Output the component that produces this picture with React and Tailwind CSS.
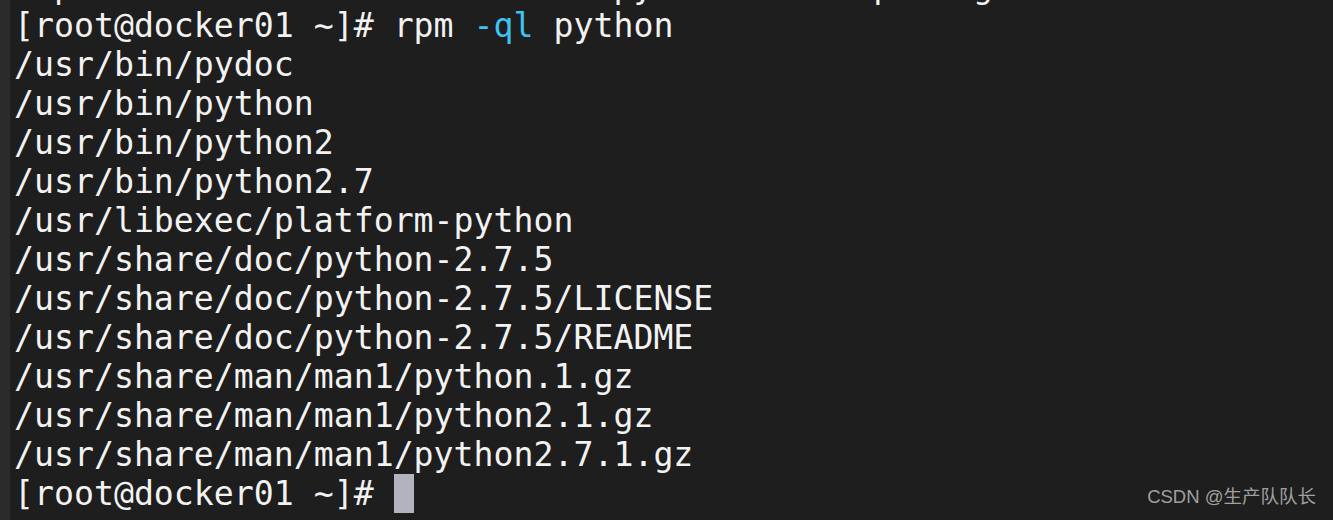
const lines = [
  "/usr/bin/pydoc",
  "/usr/bin/python",
  "/usr/bin/python2",
  "/usr/bin/python2.7",
  "/usr/libexec/platform-python",
  "/usr/share/doc/python-2.7.5",
  "/usr/share/doc/python-2.7.5/LICENSE",
  "/usr/share/doc/python-2.7.5/README",
  "/usr/share/man/man1/python.1.gz",
  "/usr/share/man/man1/python2.1.gz",
  "/usr/share/man/man1/python2.7.1.gz",
];

export default function App() {
  return (
    <div className="flex h-[520px] w-[1333px] overflow-hidden bg-[#1e1e1e]">
      <div className="w-[10px] shrink-0 bg-[#2b2b2b]" />
      <div className="relative flex-1">
        <div
          className="mt-[-33px] pl-[4px] text-[33.2px] leading-[39px] text-[#f2f2f2] whitespace-pre"
          style={{ fontFamily: '"DejaVu Sans Mono", monospace' }}
        >
          <div>Report the installed files of python files package</div>
          <div>
            [root@docker01 ~]# rpm <span className="text-[#3ec4f2]">-ql</span> python
          </div>
          {lines.map((l) => (
            <div key={l}>{l}</div>
          ))}
          <div className="flex items-center">
            <span>[root@docker01 ~]# </span>
            <span className="inline-block h-[39px] w-[20px] bg-[#b3b3c0]" />
          </div>
        </div>
        <div
          className="absolute right-[17px] bottom-[9px] text-[18.5px] text-[#a0a0a0]"
          style={{ fontFamily: '"Liberation Sans", "Noto Sans CJK SC", sans-serif' }}
        >
          CSDN @生产队队长
        </div>
      </div>
    </div>
  );
}
